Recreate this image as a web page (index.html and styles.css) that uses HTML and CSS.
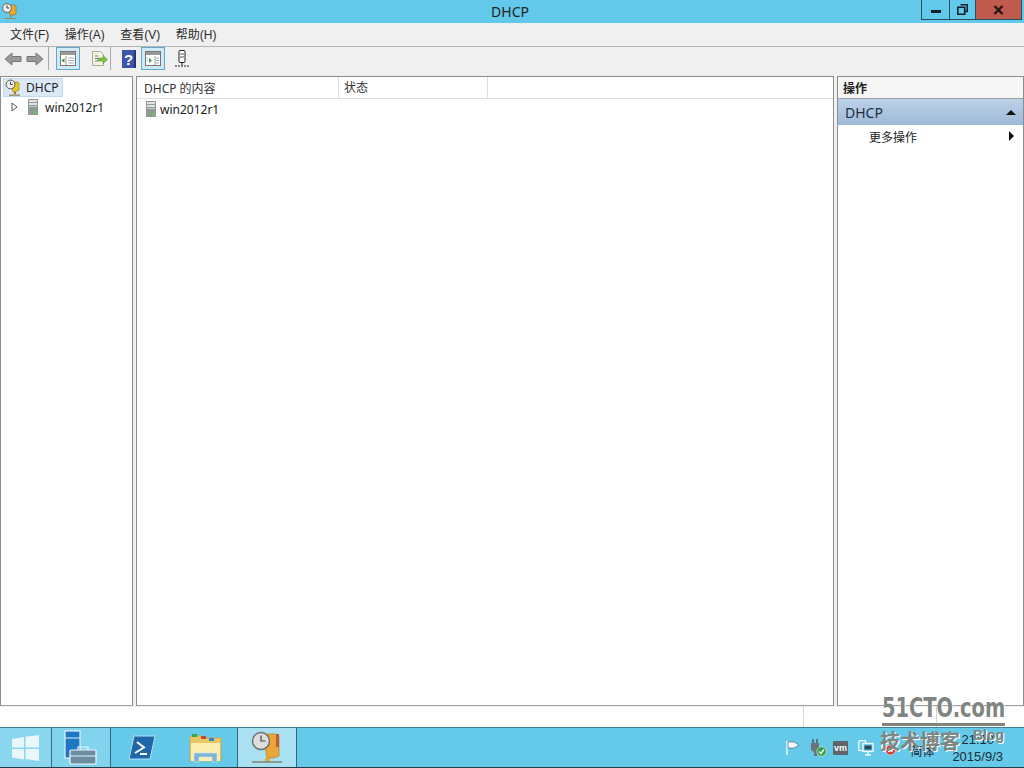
FILE: index.html
```html
<!DOCTYPE html>
<html lang="zh-CN">
<head>
  <meta charset="UTF-8">
  <title>DHCP</title>
  <link rel="stylesheet" href="styles.css">
</head>
<body>
  <div class="window">
    <!-- Title bar -->
    <div class="titlebar">
      <svg class="app-icon" width="18" height="18" viewBox="0 0 18 18">
        <path d="M6 3h7l2 1v8l-2 1H9z" fill="#e8a92c" stroke="#8a6a1c" stroke-width=".6"/>
        <circle cx="6" cy="6" r="4.400" fill="#eee" stroke="#666"/>
        <path d="M6 3.200V6h2.400" fill="none" stroke="#444"/>
        <path d="M9 13h2v2H9zM4 16h11v1H4z" fill="#9a8a50"/>
      </svg>
      <div class="title">DHCP</div>
      <div class="caption-btns">
        <div class="cap-btn cap-min"><span class="min-glyph"></span></div>
        <div class="cap-btn cap-max">
          <svg width="11" height="11" viewBox="0 0 11 11"><path d="M3.500 .8h6.700v6.700H8M.8 3.200h6.900v7H.8z" fill="none" stroke="#10202a" stroke-width="1.600"/></svg>
        </div>
        <div class="cap-btn cap-close">
          <svg width="11" height="10" viewBox="0 0 11 10"><path d="M1.500 1l8 8M9.500 1l-8 8" stroke="#2a1410" stroke-width="2.400"/></svg>
        </div>
      </div>
    </div>

    <!-- Menu -->
    <div class="menubar">
      <span class="menu-item">文件(F)</span>
      <span class="menu-item">操作(A)</span>
      <span class="menu-item">查看(V)</span>
      <span class="menu-item">帮助(H)</span>
    </div>

    <!-- Toolbar -->
    <div class="toolbar">
      <svg class="tool tool-arrow" width="18" height="16" viewBox="0 0 18 16"><path d="M1 8l7-6v3.500h9v5H8V14z" fill="#9a9a9a" stroke="#777"/></svg>
      <svg class="tool tool-arrow" width="18" height="16" viewBox="0 0 18 16"><path d="M17 8l-7-6v3.500H1v5h9V14z" fill="#9a9a9a" stroke="#777"/></svg>
      <span class="tool-sep"></span>
      <span class="tool-box">
        <svg width="16" height="15" viewBox="0 0 16 15"><rect x=".5" y=".5" width="15" height="14" fill="#fff" stroke="#777"/><path d="M1 1h14v3H1z" fill="#9a9a9a"/><path d="M6 5v9" stroke="#999"/><path d="M4.500 7v5L1.500 9.500z" fill="#3b9a5a"/><path d="M8 7h6M8 9.500h6M8 12h6" stroke="#aaa"/></svg>
      </span>
      <svg class="tool tool-export" width="18" height="17" viewBox="0 0 18 17"><path d="M2.500 1.500h8l3 3v11h-11z" fill="#f6f3e2" stroke="#b0ab90"/><path d="M5 6h3M5 8.500h3M5 11h3" stroke="#777"/><path d="M8 8h5V5.500L17.500 9.500 13 13.500V11H8z" fill="#7cc04a" stroke="#5a9a30" stroke-width=".6"/></svg>
      <span class="tool-sep"></span>
      <svg class="tool tool-help" width="14" height="18" viewBox="0 0 14 18"><rect width="14" height="18" fill="#3f55a8"/><rect x="12" width="2" height="18" fill="#27367a"/><text x="6.500" y="14.500" class="help-mark">?</text></svg>
      <span class="tool-box tool-box-near">
        <svg width="16" height="15" viewBox="0 0 16 15"><rect x=".5" y=".5" width="15" height="14" fill="#fff" stroke="#777"/><path d="M1 1h14v3H1z" fill="#9a9a9a"/><path d="M10 5v9" stroke="#999"/><path d="M4 7v5L7 9.500z" fill="#3b9a5a"/><path d="M1.500 7h1M1.500 9.500h1M11 7h3M11 9.500h3M11 12h3" stroke="#aaa"/></svg>
      </span>
      <svg class="tool tool-server" width="16" height="18" viewBox="0 0 16 18"><rect x="5" y=".5" width="6" height="12" rx="1" fill="#fff" stroke="#222"/><path d="M6 4h4M6 7h4" stroke="#555"/><path d="M8 12.500v3" stroke="#222"/><path d="M1 16h14" stroke="#222" stroke-dasharray="2 1"/></svg>
    </div>

    <!-- Panes -->
    <div class="panes">
      <div class="pane pane-tree">
        <div class="tree-root">
          <svg width="18" height="18" viewBox="0 0 18 18">
            <path d="M6 3h6l2 1v7l-3 2H8z" fill="#e6c81e" stroke="#8a7a1c" stroke-width=".6"/>
            <circle cx="5.500" cy="5.500" r="4.400" fill="#eee" stroke="#555"/>
            <path d="M5.500 2.800v2.700h2.300" fill="none" stroke="#444"/>
            <path d="M9 13h2v2H9zM4 15.500h11v1.200H4z" fill="#8d8348"/>
          </svg>
          <span class="tree-label">DHCP</span>
        </div>
        <div class="tree-row">
          <svg class="expander" width="7" height="10" viewBox="0 0 7 10"><path d="M1 1l5 4-5 4z" fill="#fff" stroke="#555"/></svg>
          <svg class="server-icon" width="10" height="16" viewBox="0 0 10 16"><rect width="10" height="16" fill="#8f9a94"/><rect x="1" y="1" width="8" height="2" fill="#dfe4e2"/><rect x="1" y="4" width="8" height="2" fill="#dfe4e2"/><rect x="1" y="7" width="8" height="1" fill="#c5ccc8"/><rect x="6" y="12" width="3" height="3" fill="#6fbf6a"/></svg>
          <span>win2012r1</span>
        </div>
      </div>

      <div class="pane pane-list">
        <div class="list-head">
          <div class="col col-name">DHCP 的内容</div>
          <div class="col col-state">状态</div>
        </div>
        <div class="list-row">
          <svg class="server-icon" width="10" height="16" viewBox="0 0 10 16"><rect width="10" height="16" fill="#8f9a94"/><rect x="1" y="1" width="8" height="2" fill="#dfe4e2"/><rect x="1" y="4" width="8" height="2" fill="#dfe4e2"/><rect x="1" y="7" width="8" height="1" fill="#c5ccc8"/><rect x="6" y="12" width="3" height="3" fill="#6fbf6a"/></svg>
          <span>win2012r1</span>
        </div>
      </div>

      <div class="pane pane-actions">
        <div class="actions-head">操作</div>
        <div class="actions-group">
          <span>DHCP</span>
          <span class="arrow-up"></span>
        </div>
        <div class="actions-item">
          <span>更多操作</span>
          <span class="arrow-right"></span>
        </div>
      </div>
    </div>

    <!-- Status bar -->
    <div class="statusbar">
      <div class="status-cell status-main"></div>
      <div class="status-cell status-mid"></div>
      <div class="status-cell status-end"></div>
    </div>
  </div>

  <!-- Taskbar -->
  <div class="taskbar">
    <div class="task task-start">
      <svg width="28" height="26" viewBox="0 0 28 26"><path d="M0 4l12-2v10.500H0zM13.500 1.800L27 0v12.500H13.500zM0 14h12v10.500L0 22.500zM13.500 14H27v12l-13.500-2z" fill="#e9f7fb"/></svg>
    </div>
    <div class="task task-wide">
      <svg width="34" height="35" viewBox="0 0 34 35"><rect x="1" y="1" width="15" height="27" fill="#1f77c4" stroke="#dff2fa" stroke-width="1.200"/><path d="M1 8h15" stroke="#dff2fa"/><rect x="6" y="20" width="26" height="14" rx="1" fill="#6f8da0" stroke="#eef8fb" stroke-width="1.200"/><path d="M14 20v-3h10v3" fill="none" stroke="#eef8fb" stroke-width="1.200"/><path d="M6 26h26" stroke="#dff2fa"/></svg>
    </div>
    <div class="task task-ps">
      <svg width="28" height="26" viewBox="0 0 28 26"><path d="M6 1h21l-5 23H1z" fill="#1f67ab" stroke="#b9dcf0"/><path d="M9 7l7 5.500L7 18" fill="none" stroke="#fff" stroke-width="2"/><path d="M12 19h7" stroke="#fff" stroke-width="2"/></svg>
    </div>
    <div class="task task-folder">
      <svg width="33" height="30" viewBox="0 0 33 30"><path d="M1 3h14l2 2h15v23H1z" fill="#e9c765" stroke="#c9a84a" stroke-width=".8"/><path d="M2 10h29v18H2z" fill="#fbeeb0"/><path d="M3 1h5v3H3z" fill="#3fa34a"/><path d="M12 3h5v3h-5z" fill="#c04a32"/><path d="M20 5h5v3h-5z" fill="#3c86c0"/><path d="M5 29V20h23v9h-5v-5H10v5z" fill="#7fb6d8" stroke="#cfe6f2" stroke-width=".6"/></svg>
    </div>
    <div class="task task-active">
      <svg width="32" height="34" viewBox="0 0 32 34"><path d="M12 3h13l3 3v19l-5 2H16z" fill="#e9a63a" stroke="#b07a1f" stroke-width=".6"/><path d="M25 3h3v13h-3z" fill="#c85a30"/><circle cx="10" cy="10" r="8.500" fill="#ddd" stroke="#6b6b6b" stroke-width="1.400"/><path d="M10 4.500V10h4.500" fill="none" stroke="#444" stroke-width="1.200"/><path d="M14 27h5v3h-5z" fill="#e9a63a"/><path d="M1 30h30v2H1z" fill="#8a9a8a"/></svg>
    </div>
    <div class="tray">
      <svg width="16" height="16" viewBox="0 0 16 16"><path d="M2 1v14" stroke="#f4fbfd" stroke-width="1.400"/><path d="M3 2h6l5 3-5 3H3z" fill="#f4fbfd" stroke="#31424c" stroke-width=".5"/></svg>
      <svg class="tray-plug" width="18" height="18" viewBox="0 0 18 18"><path d="M4 0v4M8 0v4" stroke="#555" stroke-width="1.400"/><path d="M2 4h8v7l-2 2v4H5v-4L2 11z" fill="#6d7478"/><circle cx="12.500" cy="12.500" r="4.800" fill="#35a24a" stroke="#e8f6ea" stroke-width=".6"/><path d="M10 12.500l2 2 3-4" fill="none" stroke="#fff" stroke-width="1.300"/></svg>
      <svg class="tray-vm" width="15" height="14" viewBox="0 0 15 14"><rect width="15" height="14" rx="1" fill="#5b6468"/><text x="7.500" y="10" class="vm-mark">vm</text></svg>
      <svg class="tray-net" width="16" height="16" viewBox="0 0 16 16"><rect x=".8" y=".7" width="7" height="10" rx="1" fill="none" stroke="#f4fbfd" stroke-width="1.300"/><rect x="5" y="3.500" width="10" height="8" fill="#65c9ea" stroke="#f4fbfd" stroke-width="1.300"/><path d="M6.500 5.500h7v4h-7z" fill="#2b4a58"/><path d="M10 11.500V15M7 15h6" stroke="#f4fbfd" stroke-width="1.300"/></svg>
      <svg class="tray-sound" width="16" height="16" viewBox="0 0 16 16"><path d="M1 5h2l3-3v11l-3-3H1z" fill="#e6f1f4"/><circle cx="10.500" cy="10" r="5" fill="#cf3a36" stroke="#f3d6d4" stroke-width=".7"/><path d="M8.500 8l4 4M12.500 8l-4 4" stroke="#fff" stroke-width="1.300"/></svg>
      <span class="ime">简体</span>
      <div class="clock">
        <span>21:10</span>
        <span>2015/9/3</span>
      </div>
    </div>
  </div>

  <!-- Blog watermark sits over the corner of the page -->
  <div class="watermark">
    <div class="wm-main"><span class="wm-squeeze">51CTO.com</span></div>
    <div class="wm-sub">技术博客</div>
    <div class="wm-blog">Blog</div>
  </div>
</body>
</html>
```

FILE: styles.css
```css
html, body {
  margin: 0;
  padding: 0;
  height: 768px;
  overflow: hidden;
}
body {
  display: flex;
  flex-direction: column;
  position: relative;
  background: #f0f0f0;
  font-family: "Liberation Sans", "Noto Sans CJK SC", sans-serif;
  font-size: 12px;
  color: #222;
}
.window {
  height: 727px;
  display: flex;
  flex-direction: column;
}

/* Title bar */
.titlebar {
  height: 23px;
  flex: none;
  display: flex;
  position: relative;
  background: #63c9ea;
}
.app-icon {
  margin: 2px 0 0 1px;
}
.title {
  position: absolute;
  left: 0;
  right: 4px;
  top: 3px;
  text-align: center;
  font-family: "Noto Sans", sans-serif;
  font-size: 14px;
  line-height: 18px;
  color: #222;
}
.caption-btns {
  position: absolute;
  top: 0;
  right: 2px;
  height: 20px;
  display: flex;
  border: 1px solid #24505f;
  border-top: none;
  box-sizing: border-box;
}
.cap-btn {
  display: flex;
  align-items: center;
  justify-content: center;
}
.cap-min {
  width: 27px;
  border-right: 1px solid #24505f;
}
.cap-max {
  width: 25px;
  border-right: 1px solid #24505f;
}
.cap-close {
  width: 45px;
  background: #bf5a4e;
}
.min-glyph {
  width: 10px;
  height: 3px;
  margin-top: 3px;
  background: #10202a;
}

/* Menu */
.menubar {
  height: 24px;
  flex: none;
  box-sizing: border-box;
  display: flex;
  gap: 15.5px;
  padding: 4px 0 0 10px;
  background: #f0f0f0;
  border-bottom: 1px solid #b4b4b4;
  font-size: 12px;
  line-height: 17px;
  color: #2a2a2a;
}

/* Toolbar */
.toolbar {
  height: 29px;
  flex: none;
  box-sizing: border-box;
  display: flex;
  align-items: center;
  padding: 0 0 6px 4px;
  background: #f0f0f0;
}
.tool-arrow {
  margin-right: 4px;
}
.tool-sep {
  width: 1px;
  height: 23px;
  background: #a8a8a8;
}
.tool-box {
  width: 24px;
  height: 23px;
  box-sizing: border-box;
  display: flex;
  align-items: center;
  justify-content: center;
  margin: 0 10px 0 7px;
  background: #cfe9f7;
  border: 1px solid #63a9c9;
}
.tool-export {
  margin-right: 2px;
}
.tool-help {
  margin-left: 11px;
}
.tool-box-near {
  margin: 0 9px 0 5px;
}
.help-mark {
  font-family: "Liberation Sans", sans-serif;
  font-size: 15px;
  font-weight: bold;
  fill: #fff;
  text-anchor: middle;
}

/* Panes */
.panes {
  flex: 1;
  display: flex;
  gap: 3px;
}
.pane {
  box-sizing: border-box;
  background: #fff;
  border: 1px solid #8c8c8c;
  border-bottom-color: #a0a0a0;
}
.pane-tree {
  width: 133px;
  flex: none;
  padding: 1px 0 0 2px;
}
.tree-root {
  display: flex;
  align-items: center;
  width: 60px;
  height: 19px;
  box-sizing: border-box;
  padding-left: 1px;
  background: #dbe9f7;
  border: 1px solid #c4d8ec;
}
.tree-label {
  margin-left: 3px;
  font-family: "Noto Sans", sans-serif;
  font-size: 12px;
}
.tree-row {
  display: flex;
  align-items: center;
  height: 20px;
  font-family: "Noto Sans", sans-serif;
  font-size: 12px;
}
.expander {
  margin: 0 10px 0 8px;
}
.tree-row .server-icon {
  margin-right: 7px;
}
.pane-list {
  width: 698px;
  flex: none;
}
.list-head {
  height: 22px;
  display: flex;
  box-sizing: border-box;
  border-bottom: 1px solid #dedede;
  font-size: 12px;
  line-height: 23px;
  color: #333;
}
.col {
  box-sizing: border-box;
  border-right: 1px solid #dedede;
  padding-left: 7px;
}
.col-name {
  width: 202px;
  font-family: "Noto Sans", "Noto Sans CJK SC", sans-serif;
}
.col-state {
  width: 149px;
  padding-left: 5px;
}
.list-row {
  display: flex;
  align-items: center;
  height: 20px;
  padding-left: 9px;
  font-family: "Noto Sans", sans-serif;
  font-size: 12px;
}
.list-row .server-icon {
  margin-right: 4px;
}
.pane-actions {
  flex: 1;
}
.actions-head {
  height: 22px;
  box-sizing: border-box;
  padding: 4px 0 0 5px;
  border-bottom: 1px solid #a0a0a0;
  background: #f6f6f6;
  font-size: 12px;
  font-weight: bold;
  line-height: 16px;
}
.actions-group {
  height: 26px;
  display: flex;
  align-items: center;
  justify-content: space-between;
  padding: 0 7px;
  background: linear-gradient(#bcd2e8, #9db9d8);
  font-family: "Noto Sans", sans-serif;
  font-size: 14px;
  color: #1f2f3f;
}
.arrow-up {
  border-left: 5px solid transparent;
  border-right: 5px solid transparent;
  border-bottom: 5px solid #111;
}
.actions-item {
  height: 22px;
  display: flex;
  align-items: center;
  justify-content: space-between;
  padding: 0 9px 0 31px;
}
.arrow-right {
  border-top: 5px solid transparent;
  border-bottom: 5px solid transparent;
  border-left: 5px solid #111;
}

/* Status bar */
.statusbar {
  height: 21px;
  flex: none;
  display: flex;
  background: #fff;
}
.status-cell {
  box-sizing: border-box;
  border-top: 1px solid #f0f0f0;
}
.status-main {
  width: 803px;
}
.status-mid {
  width: 134px;
  border-left: 1px solid #d4d4d4;
  border-right: 1px solid #d4d4d4;
}
.status-end {
  flex: 1;
}

/* Taskbar */
.taskbar {
  height: 41px;
  flex: none;
  box-sizing: border-box;
  display: flex;
  background: #65c9ea;
  border-top: 1px solid #3f7f95;
  border-bottom: 1px solid #203c48;
}
.task {
  height: 100%;
  box-sizing: border-box;
  display: flex;
  align-items: center;
  justify-content: center;
  flex: none;
}
.task-start {
  width: 52px;
  background: #8ad6ee;
  border-right: 1px solid #2e6a80;
}
.task-wide {
  width: 59px;
  background: #82d3ed;
  border-right: 1px solid #2e6a80;
}
.task-ps {
  width: 62px;
}
.task-folder {
  width: 64px;
}
.task-active {
  width: 60px;
  background: #a9e0f2;
  border-left: 1px solid #2e6a80;
  border-right: 1px solid #2e6a80;
}
.tray {
  margin-left: auto;
  display: flex;
  align-items: center;
  padding-right: 21px;
}
.tray-plug {
  margin-left: 8px;
}
.tray-vm {
  margin-left: 6px;
}
.tray-net {
  margin-left: 10px;
}
.tray-sound {
  margin-left: 6px;
}
.vm-mark {
  font-family: "Liberation Sans", sans-serif;
  font-size: 9px;
  font-weight: bold;
  fill: #fff;
  text-anchor: middle;
}
.ime {
  font-size: 12px;
  color: #223;
  margin: 6px 18px 0 14px;
}
.clock {
  display: flex;
  flex-direction: column;
  align-items: center;
  font-size: 13px;
  line-height: 17px;
  color: #1c2c34;
}

/* Watermark */
.watermark {
  position: absolute;
  left: 880px;
  top: 692px;
  width: 144px;
  height: 76px;
  color: #7f8580;
}
.wm-main {
  position: absolute;
  left: 2px;
  top: 0;
  width: 123px;
  height: 34px;
  box-sizing: border-box;
  border-bottom: 3px solid #80857f;
  font-family: "DejaVu Sans", sans-serif;
  font-size: 27px;
  font-weight: bold;
  line-height: 31px;
  white-space: nowrap;
  text-shadow: 1px 1px 0 #fff;
}
.wm-squeeze {
  display: inline-block;
  transform: scaleX(.72);
  transform-origin: left center;
}
.wm-sub {
  position: absolute;
  left: 0;
  top: 36px;
  font-family: "Noto Sans CJK SC", sans-serif;
  font-size: 20px;
  font-weight: bold;
  line-height: 26px;
  text-shadow: 1px 1px 0 #fff;
}
.wm-blog {
  position: absolute;
  left: 93px;
  top: 35px;
  font-size: 14px;
  font-weight: bold;
  line-height: 16px;
  text-shadow: 1px 1px 0 #fff;
}
```
